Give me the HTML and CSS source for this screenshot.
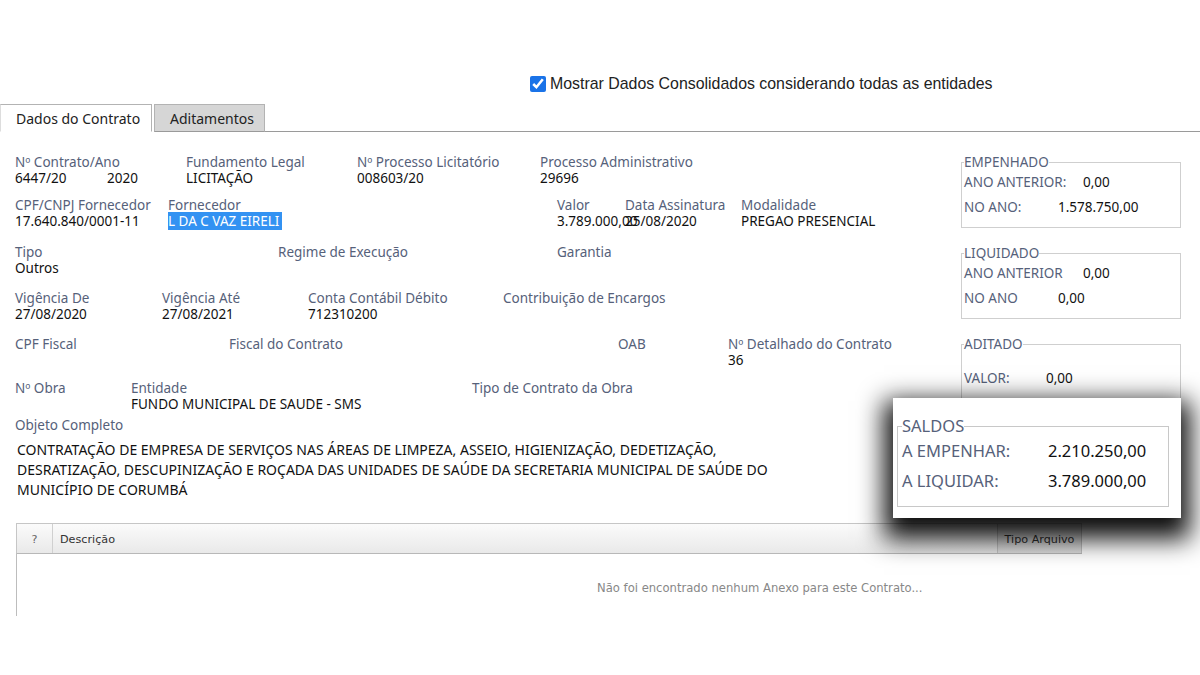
FILE: index.html
```html
<!DOCTYPE html>
<html lang="pt-BR">
<head>
<meta charset="utf-8">
<title>Dados do Contrato</title>
<link rel="stylesheet" href="styles.css">
</head>
<body>
<div class="topbar">
  <label class="consolidado"><input type="checkbox" checked> Mostrar Dados Consolidados considerando todas as entidades</label>
</div>
<div class="tabs">
  <div class="tab active">Dados do Contrato</div>
  <div class="tab">Aditamentos</div>
  <div class="tab-rest"></div>
</div>
<div class="content">
  <div class="fields">
    <div class="row r1">
      <div class="field w171"><div class="lbl">Nº Contrato/Ano</div><div class="val"><span class="num">6447/20</span>2020</div></div>
      <div class="field w171"><div class="lbl">Fundamento Legal</div><div class="val">LICITAÇÃO</div></div>
      <div class="field w183"><div class="lbl">Nº Processo Licitatório</div><div class="val">008603/20</div></div>
      <div class="field"><div class="lbl">Processo Administrativo</div><div class="val">29696</div></div>
    </div>
    <div class="row r2">
      <div class="field w153"><div class="lbl">CPF/CNPJ Fornecedor</div><div class="val">17.640.840/0001-11</div></div>
      <div class="field w389"><div class="lbl">Fornecedor</div><div class="val"><span class="sel">L DA C VAZ EIRELI</span></div></div>
      <div class="field w68"><div class="lbl">Valor</div><div class="val">3.789.000,00</div></div>
      <div class="field w116"><div class="lbl">Data Assinatura</div><div class="val">25/08/2020</div></div>
      <div class="field"><div class="lbl">Modalidade</div><div class="val">PREGAO PRESENCIAL</div></div>
    </div>
    <div class="row r3">
      <div class="field w263"><div class="lbl">Tipo</div><div class="val">Outros</div></div>
      <div class="field w279"><div class="lbl">Regime de Execução</div></div>
      <div class="field"><div class="lbl">Garantia</div></div>
    </div>
    <div class="row r4">
      <div class="field w147"><div class="lbl">Vigência De</div><div class="val">27/08/2020</div></div>
      <div class="field w146"><div class="lbl">Vigência Até</div><div class="val">27/08/2021</div></div>
      <div class="field w195"><div class="lbl">Conta Contábil Débito</div><div class="val">712310200</div></div>
      <div class="field"><div class="lbl">Contribuição de Encargos</div></div>
    </div>
    <div class="row r5">
      <div class="field w214"><div class="lbl">CPF Fiscal</div></div>
      <div class="field w389"><div class="lbl">Fiscal do Contrato</div></div>
      <div class="field w110"><div class="lbl">OAB</div></div>
      <div class="field"><div class="lbl">Nº Detalhado do Contrato</div><div class="val">36</div></div>
    </div>
    <div class="row r6">
      <div class="field w116"><div class="lbl">Nº Obra</div></div>
      <div class="field w341"><div class="lbl">Entidade</div><div class="val">FUNDO MUNICIPAL DE SAUDE - SMS</div></div>
      <div class="field"><div class="lbl">Tipo de Contrato da Obra</div></div>
    </div>
    <div class="lbl">Objeto Completo</div>
    <div class="objeto">CONTRATAÇÃO DE EMPRESA DE SERVIÇOS NAS ÁREAS DE LIMPEZA, ASSEIO, HIGIENIZAÇÃO, DEDETIZAÇÃO,<br>DESRATIZAÇÃO, DESCUPINIZAÇÃO E ROÇADA DAS UNIDADES DE SAÚDE DA SECRETARIA MUNICIPAL DE SAÚDE DO<br>MUNICÍPIO DE CORUMBÁ</div>
  </div>
  <div class="side">
    <fieldset class="box">
      <legend>EMPENHADO</legend>
      <div class="line"><span class="k k119">ANO ANTERIOR:</span><span class="v">0,00</span></div>
      <div class="line"><span class="k k94">NO ANO:</span><span class="v">1.578.750,00</span></div>
    </fieldset>
    <fieldset class="box">
      <legend>LIQUIDADO</legend>
      <div class="line"><span class="k k119">ANO ANTERIOR</span><span class="v">0,00</span></div>
      <div class="line"><span class="k k94">NO ANO</span><span class="v">0,00</span></div>
    </fieldset>
    <fieldset class="box aditado">
      <legend>ADITADO</legend>
      <div class="line gap"><span class="k k82">VALOR:</span><span class="v">0,00</span></div>
    </fieldset>
    <div class="saldos">
      <fieldset class="sbox">
        <legend>SALDOS</legend>
        <div class="sline"><span class="sk">A EMPENHAR:</span><span class="sv">2.210.250,00</span></div>
        <div class="sline"><span class="sk">A LIQUIDAR:</span><span class="sv">3.789.000,00</span></div>
      </fieldset>
    </div>
  </div>
</div>
<div class="anexos">
  <div class="thead">
    <div class="th c-q">?</div>
    <div class="th c-desc">Descrição</div>
    <div class="th c-tipo">Tipo Arquivo</div>
  </div>
  <div class="tbody">Não foi encontrado nenhum Anexo para este Contrato...</div>
</div>
</body>
</html>
```
FILE: styles.css
```css
html, body {
  margin: 0;
  padding: 0;
  background: #fff;
  overflow: hidden;
}
body {
  width: 1200px;
  height: 675px;
  font-family: "Noto Sans", "Open Sans", sans-serif;
  font-size: 13.5px;
  color: #1a1a1a;
}
.topbar {
  height: 104px;
  box-sizing: border-box;
  padding: 75px 0 0 530px;
}
.consolidado {
  display: flex;
  align-items: center;
  font-family: "Liberation Sans", Arial, sans-serif;
  font-size: 15.9px;
  color: #222;
  gap: 4px;
}
.consolidado input {
  width: 16px;
  height: 16px;
  margin: 0;
  accent-color: #1a73e8;
}
.tabs {
  display: flex;
  height: 28px;
}
.tab {
  box-sizing: border-box;
  height: 28px;
  padding: 5px 0 0 15px;
  border: 1px solid #b3b3b3;
  border-bottom: 1px solid #9a9a9a;
  background: #d6d6d6;
  color: #222;
  font-size: 14px;
  line-height: 18px;
  white-space: nowrap;
}
.tab.active {
  width: 152px;
  background: #fff;
  border-bottom-color: #fff;
  border-left-color: #ddd;
}
.tab + .tab {
  margin-left: 2px;
  width: 111px;
}
.tab-rest {
  flex: 1;
  border-bottom: 1px solid #9a9a9a;
}
.content {
  display: flex;
  position: relative;
}
.fields {
  width: 961px;
  box-sizing: border-box;
  padding: 22px 0 0 15px;
}
.row {
  display: flex;
  height: 32px;
  margin-bottom: 14px;
}
.r1 { margin-bottom: 11px; }
.r2 { margin-bottom: 15px; }
.r5 { margin-bottom: 12px; }
.r6 { margin-bottom: 5px; }
.field {
  flex: none;
  white-space: nowrap;
}
.w68 { width: 68px; }
.w110 { width: 110px; }
.w116 { width: 116px; }
.w146 { width: 146px; }
.w147 { width: 147px; }
.w153 { width: 153px; }
.w171 { width: 171px; }
.w183 { width: 183px; }
.w195 { width: 195px; }
.w214 { width: 214px; }
.w263 { width: 263px; }
.w279 { width: 279px; }
.w341 { width: 341px; }
.w389 { width: 389px; }
.lbl {
  color: #56617a;
  line-height: 16px;
  height: 16px;
}
.val {
  color: #111;
  line-height: 16px;
  height: 16px;
}
.num {
  display: inline-block;
  width: 92px;
}
.sel {
  background: #3392f2;
  color: #fff;
  padding-right: 3px;
}
.objeto {
  margin-top: 7px;
  margin-left: 2px;
  line-height: 20px;
  font-size: 14px;
  color: #111;
  white-space: nowrap;
}
.side {
  width: 220px;
  padding-top: 22px;
}
.box {
  margin: 0 0 17px 0;
  padding: 0 2px 7px 2px;
  border: 1px solid #cfcfcf;
  min-inline-size: 0;
  font-size: 13.5px;
}
.box legend {
  padding: 0;
  margin-left: 0;
  color: #56617a;
  line-height: 16px;
}
.line {
  display: flex;
  line-height: 25px;
  white-space: nowrap;
}
.line .k { color: #56617a; flex: none; }
.line .v { color: #111; }
.k119 { width: 119px; }
.k94 { width: 94px; }
.k82 { width: 82px; }
.line.gap { margin-top: 14px; }
.aditado { height: 60px; }
.saldos {
  position: absolute;
  left: 893px;
  top: 266px;
  width: 288px;
  height: 120px;
  box-sizing: border-box;
  background: #fff;
  padding: 18px 12px 0 4px;
  box-shadow: 0 12px 24px 9px rgba(0, 0, 0, 0.95);
  z-index: 2;
}
.sbox {
  margin: 0;
  padding: 0 4px 10px 4px;
  border: 1px solid #c8c8c8;
  min-inline-size: 0;
  font-size: 16.5px;
}
.sbox legend {
  padding: 0;
  color: #56617a;
  line-height: 20px;
}
.sline {
  display: flex;
  line-height: 30px;
  white-space: nowrap;
}
.sk { width: 146px; color: #56617a; }
.sv { color: #111; }
.anexos {
  margin: 23px 0 0 16px;
  width: 1066px;
}
.thead {
  display: flex;
  height: 31px;
  box-sizing: border-box;
  border-top: 1px solid #c6c6c6;
  border-bottom: 1px solid #b8b8b8;
  border-left: 1px solid #c6c6c6;
  background: linear-gradient(#fbfbfb, #e9e9e9);
  font-family: "DejaVu Sans", Verdana, sans-serif;
  font-size: 11.2px;
  color: #333;
}
.th {
  line-height: 32px;
  box-sizing: border-box;
}
.c-q {
  width: 36px;
  text-align: center;
  color: #666;
  border-right: 1px solid #d0d0d0;
}
.c-desc {
  flex: 1;
  padding-left: 7px;
}
.c-tipo {
  width: 85px;
  border-left: 1px solid #c6c6c6;
  border-right: 1px solid #c6c6c6;
  text-align: center;
  background: linear-gradient(#f0f0f0, #e0e0e0);
}
.tbody {
  height: 62px;
  border-left: 1px solid #bdbdbd;
  padding-left: 580px;
  line-height: 68px;
  font-family: "DejaVu Sans", Verdana, sans-serif;
  font-size: 11.6px;
  color: #888;
  white-space: nowrap;
}
```
